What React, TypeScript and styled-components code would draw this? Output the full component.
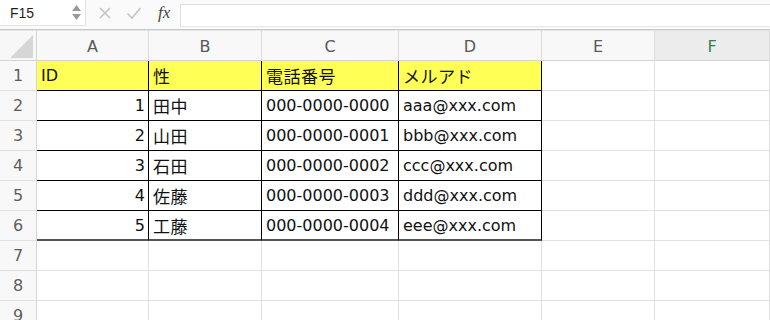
import React from 'react'
import styled, { createGlobalStyle } from 'styled-components'

const GlobalStyle = createGlobalStyle`
  html, body {
    margin: 0;
    padding: 0;
    background: #ffffff;
    overflow: hidden;
  }
  body {
    width: 770px;
    height: 320px;
    font-family: "DejaVu Sans", "Noto Sans CJK JP", sans-serif;
  }
`

const Window = styled.div`
  width: 770px;
  height: 320px;
  overflow: hidden;
  background: #ffffff;
`

const FormulaBar = styled.div`
  display: flex;
  align-items: stretch;
  height: 29px;
  background: #fafafa;
  border-bottom: 1px solid #c9c9c9;
  box-sizing: border-box;
  height: 30px;
`

const NameBox = styled.div`
  width: 86px;
  height: 26px;
  display: flex;
  align-items: center;
  justify-content: space-between;
  padding: 0 4px 0 10px;
  box-sizing: border-box;
  background: #ffffff;
  border-right: 1px solid #e2e2e2;
  border-bottom: 1px solid #e2e2e2;
  font-family: "Liberation Sans", sans-serif;
  font-size: 14px;
  color: #1f1f1f;
`

const Spinner = styled.div`
  display: flex;
  flex-direction: column;
  gap: 3px;
`

const Actions = styled.div`
  width: 94px;
  display: flex;
  align-items: center;
  padding-left: 12px;
  gap: 14px;
  box-sizing: border-box;
  padding-bottom: 3px;
`

const Fx = styled.span`
  font-family: "Liberation Serif", serif;
  font-style: italic;
  font-size: 17px;
  color: #444;
  margin-left: 2px;
`

const FormulaInput = styled.div`
  flex: 1;
  margin-top: 4px;
  height: 21px;
  background: #ffffff;
  border-top: 1px solid #dedede;
  border-left: 1px solid #dedede;
  border-bottom: 1px solid #e6e6e6;
`

const Grid = styled.div`
  display: grid;
  grid-template-columns: 37px 112px 113px 137px 143px 113px 1fr;
  grid-template-rows: 31px;
  grid-auto-rows: 30px;
`

const Corner = styled.div`
  position: relative;
  background: #f7f7f7;
  border-right: 1px solid #d4d4d4;
  border-bottom: 1px solid #d4d4d4;
  border-top: 1px solid #e4e4e4;
  box-sizing: border-box;
`

const CornerMark = styled.span`
  position: absolute;
  left: 10px;
  top: 4px;
  width: 23px;
  height: 23px;
  background: #d6d6d6;
  clip-path: polygon(100% 0, 100% 100%, 0 100%);
`

const ColHead = styled.div<{ $active?: boolean }>`
  display: flex;
  align-items: center;
  justify-content: center;
  background: ${({ $active }) => ($active ? '#ececec' : '#f8f8f8')};
  border-right: 1px solid #dcdcdc;
  border-bottom: 1px solid #d4d4d4;
  border-top: 1px solid #e4e4e4;
  box-sizing: border-box;
  font-size: 16px;
  color: ${({ $active }) => ($active ? '#3e7d4a' : '#595959')};
  padding-top: 1px;
`

const RowHead = styled.div`
  display: flex;
  align-items: center;
  justify-content: center;
  background: #f8f8f8;
  border-right: 1px solid #d4d4d4;
  border-bottom: 1px solid #e0e0e0;
  box-sizing: border-box;
  font-size: 16px;
  color: #5e5e5e;
`

const Cell = styled.div<{ $fill?: boolean; $right?: boolean; $boxed?: boolean; $last?: boolean }>`
  display: flex;
  align-items: center;
  justify-content: ${({ $right }) => ($right ? 'flex-end' : 'flex-start')};
  padding: ${({ $right }) => ($right ? '0 3px 0 0' : '0 0 0 4px')};
  box-sizing: border-box;
  background: ${({ $fill }) => ($fill ? '#ffff55' : '#ffffff')};
  border-right: 1px solid ${({ $boxed }) => ($boxed ? '#000000' : '#e0e0e0')};
  border-bottom: ${({ $boxed, $last }) =>
    $last ? '2px solid #555555' : $boxed ? '1px solid #000000' : '1px solid #e0e0e0'};
  font-size: 16px;
  color: #111111;
  white-space: nowrap;
  overflow: hidden;
`

const Jp = styled.span`
  font-family: "Noto Sans CJK JP", sans-serif;
  font-size: 17px;
  letter-spacing: 0.5px;
`

const columns = ['A', 'B', 'C', 'D', 'E', 'F']

const header = ['ID', '性', '電話番号', 'メルアド']

const people = [
  { id: 1, name: '田中', tel: '000-0000-0000', mail: 'aaa@xxx.com' },
  { id: 2, name: '山田', tel: '000-0000-0001', mail: 'bbb@xxx.com' },
  { id: 3, name: '石田', tel: '000-0000-0002', mail: 'ccc@xxx.com' },
  { id: 4, name: '佐藤', tel: '000-0000-0003', mail: 'ddd@xxx.com' },
  { id: 5, name: '工藤', tel: '000-0000-0004', mail: 'eee@xxx.com' }
]

const isJp = (s: string) => /[^\x00-\x7f]/.test(s)

const Text = ({ value }: { value: string }) =>
  isJp(value) ? <Jp>{value}</Jp> : <>{value}</>

const App: React.FC = () => {
  const rows: { key: number; cells: { value: string; right?: boolean }[]; fill?: boolean }[] = [
    { key: 1, cells: header.map((h) => ({ value: h })), fill: true },
    ...people.map((p, i) => ({
      key: i + 2,
      cells: [
        { value: String(p.id), right: true },
        { value: p.name },
        { value: p.tel },
        { value: p.mail }
      ]
    })),
    { key: 7, cells: [] },
    { key: 8, cells: [] },
    { key: 9, cells: [] }
  ]

  return (
    <Window>
      <GlobalStyle />
      <FormulaBar>
        <NameBox>
          F15
          <Spinner>
            <svg width="9" height="6" viewBox="0 0 9 6">
              <path d="M4.5 0 L9 6 L0 6 Z" fill="#9a9a9a" />
            </svg>
            <svg width="9" height="6" viewBox="0 0 9 6">
              <path d="M0 0 L9 0 L4.5 6 Z" fill="#9a9a9a" />
            </svg>
          </Spinner>
        </NameBox>
        <Actions>
          <svg width="14" height="14" viewBox="0 0 14 14">
            <path d="M2 2 L12 12 M12 2 L2 12" stroke="#c4c4c4" strokeWidth="1.6" />
          </svg>
          <svg width="16" height="14" viewBox="0 0 16 14">
            <path d="M1.5 7.5 L6 12 L14.5 2" stroke="#c4c4c4" strokeWidth="1.6" fill="none" />
          </svg>
          <Fx>fx</Fx>
        </Actions>
        <FormulaInput />
      </FormulaBar>
      <Grid>
        <Corner>
          <CornerMark />
        </Corner>
        {columns.map((c) => (
          <ColHead key={c} $active={c === 'F'}>
            {c}
          </ColHead>
        ))}
        {rows.map((row) => (
          <React.Fragment key={row.key}>
            <RowHead>{row.key}</RowHead>
            {columns.map((c, ci) => {
              const inTable = row.key <= 6 && ci < 4
              const cell = row.cells[ci]
              return (
                <Cell
                  key={c}
                  $fill={row.fill && ci < 4}
                  $right={cell?.right}
                  $boxed={inTable}
                  $last={inTable && row.key === 6}
                >
                  {cell ? <Text value={cell.value} /> : null}
                </Cell>
              )
            })}
          </React.Fragment>
        ))}
      </Grid>
    </Window>
  )
}

export default App
